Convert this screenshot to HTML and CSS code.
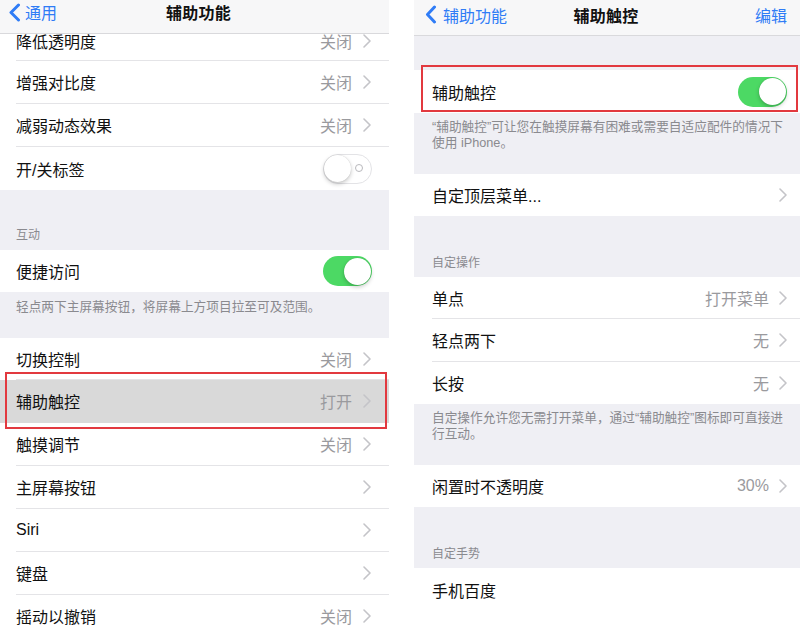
FILE: index.html
```html
<!DOCTYPE html>
<html lang="zh-CN">
<head>
<meta charset="utf-8">
<title>辅助触控</title>
<link rel="stylesheet" href="styles.css">
</head>
<body>
<div class="screen">
  <section class="panel panel-left">
    <header class="nav nav-left">
      <div class="back">
        <svg class="back-chev" width="13" height="19" viewBox="0 0 13 19"><path d="M10.5 2 L3 9.5 L10.5 17" fill="none" stroke="#2f7cf6" stroke-width="3" stroke-linecap="round" stroke-linejoin="round"/></svg>
        <span>通用</span>
      </div>
      <div class="title">辅助功能</div>
      <div class="nav-right"></div>
    </header>

    <div class="group">
      <div class="row"><div class="cell cut"><span class="label">降低透明度</span><span class="value">关闭</span><svg class="chev" width="8" height="14" viewBox="0 0 8 14"><path d="M1 1 L7 7 L1 13" fill="none" stroke="#c4c4c8" stroke-width="1.6" stroke-linecap="round" stroke-linejoin="round"/></svg></div></div>
      <div class="row"><div class="cell"><span class="label">增强对比度</span><span class="value">关闭</span><svg class="chev" width="8" height="14" viewBox="0 0 8 14"><path d="M1 1 L7 7 L1 13" fill="none" stroke="#c4c4c8" stroke-width="1.6" stroke-linecap="round" stroke-linejoin="round"/></svg></div></div>
      <div class="row"><div class="cell"><span class="label">减弱动态效果</span><span class="value">关闭</span><svg class="chev" width="8" height="14" viewBox="0 0 8 14"><path d="M1 1 L7 7 L1 13" fill="none" stroke="#c4c4c8" stroke-width="1.6" stroke-linecap="round" stroke-linejoin="round"/></svg></div></div>
      <div class="row"><div class="cell sw-cell last"><span class="label">开/关标签</span><span class="switch off"><span class="knob"></span><span class="o-mark"></span></span></div></div>
    </div>

    <div class="sec sec-l60"><span class="sechead">互动</span></div>

    <div class="group">
      <div class="row"><div class="cell sw-cell last h42"><span class="label">便捷访问</span><span class="switch on"><span class="knob"></span></span></div></div>
    </div>

    <div class="foot foot-l"><span>轻点两下主屏幕按钮，将屏幕上方项目拉至可及范围。</span></div>

    <div class="group">
      <div class="row"><div class="cell h42"><span class="label">切换控制</span><span class="value">关闭</span><svg class="chev" width="8" height="14" viewBox="0 0 8 14"><path d="M1 1 L7 7 L1 13" fill="none" stroke="#c4c4c8" stroke-width="1.6" stroke-linecap="round" stroke-linejoin="round"/></svg></div></div>
      <div class="row hl"><div class="cell"><span class="label">辅助触控</span><span class="value">打开</span><svg class="chev" width="8" height="14" viewBox="0 0 8 14"><path d="M1 1 L7 7 L1 13" fill="none" stroke="#c4c4c8" stroke-width="1.6" stroke-linecap="round" stroke-linejoin="round"/></svg></div><span class="mark mark-left"></span></div>
      <div class="row"><div class="cell"><span class="label">触摸调节</span><span class="value">关闭</span><svg class="chev" width="8" height="14" viewBox="0 0 8 14"><path d="M1 1 L7 7 L1 13" fill="none" stroke="#c4c4c8" stroke-width="1.6" stroke-linecap="round" stroke-linejoin="round"/></svg></div></div>
      <div class="row"><div class="cell"><span class="label">主屏幕按钮</span><svg class="chev" width="8" height="14" viewBox="0 0 8 14"><path d="M1 1 L7 7 L1 13" fill="none" stroke="#c4c4c8" stroke-width="1.6" stroke-linecap="round" stroke-linejoin="round"/></svg></div></div>
      <div class="row"><div class="cell"><span class="label">Siri</span><svg class="chev" width="8" height="14" viewBox="0 0 8 14"><path d="M1 1 L7 7 L1 13" fill="none" stroke="#c4c4c8" stroke-width="1.6" stroke-linecap="round" stroke-linejoin="round"/></svg></div></div>
      <div class="row"><div class="cell"><span class="label">键盘</span><svg class="chev" width="8" height="14" viewBox="0 0 8 14"><path d="M1 1 L7 7 L1 13" fill="none" stroke="#c4c4c8" stroke-width="1.6" stroke-linecap="round" stroke-linejoin="round"/></svg></div></div>
      <div class="row"><div class="cell"><span class="label">摇动以撤销</span><span class="value">关闭</span><svg class="chev" width="8" height="14" viewBox="0 0 8 14"><path d="M1 1 L7 7 L1 13" fill="none" stroke="#c4c4c8" stroke-width="1.6" stroke-linecap="round" stroke-linejoin="round"/></svg></div></div>
    </div>
  </section>

  <section class="panel panel-right">
    <header class="nav nav-r">
      <div class="back back-r">
        <svg class="back-chev" width="12" height="19" viewBox="0 0 12 19"><path d="M9.5 2 L2.5 9.5 L9.5 17" fill="none" stroke="#2f7cf6" stroke-width="3" stroke-linecap="round" stroke-linejoin="round"/></svg>
        <span>辅助功能</span>
      </div>
      <div class="title">辅助触控</div>
      <div class="nav-right"><span class="edit">编辑</span></div>
    </header>

    <div class="sec sec-r34"></div>

    <div class="group gr">
      <div class="row"><div class="cell sw-cell last"><span class="label">辅助触控</span><span class="switch on"><span class="knob"></span></span></div><span class="mark mark-right"></span></div>
    </div>

    <div class="foot foot-r"><span>“辅助触控”可让您在触摸屏幕有困难或需要自适应配件的情况下<br>使用 iPhone。</span></div>

    <div class="group gr">
      <div class="row"><div class="cell last h42"><span class="label">自定顶层菜单...</span><svg class="chev" width="8" height="14" viewBox="0 0 8 14"><path d="M1 1 L7 7 L1 13" fill="none" stroke="#c4c4c8" stroke-width="1.6" stroke-linecap="round" stroke-linejoin="round"/></svg></div></div>
    </div>

    <div class="sec sec-r61"><span class="sechead">自定操作</span></div>

    <div class="group gr">
      <div class="row"><div class="cell h42"><span class="label">单点</span><span class="value">打开菜单</span><svg class="chev" width="8" height="14" viewBox="0 0 8 14"><path d="M1 1 L7 7 L1 13" fill="none" stroke="#c4c4c8" stroke-width="1.6" stroke-linecap="round" stroke-linejoin="round"/></svg></div></div>
      <div class="row"><div class="cell"><span class="label">轻点两下</span><span class="value">无</span><svg class="chev" width="8" height="14" viewBox="0 0 8 14"><path d="M1 1 L7 7 L1 13" fill="none" stroke="#c4c4c8" stroke-width="1.6" stroke-linecap="round" stroke-linejoin="round"/></svg></div></div>
      <div class="row"><div class="cell last h42"><span class="label">长按</span><span class="value">无</span><svg class="chev" width="8" height="14" viewBox="0 0 8 14"><path d="M1 1 L7 7 L1 13" fill="none" stroke="#c4c4c8" stroke-width="1.6" stroke-linecap="round" stroke-linejoin="round"/></svg></div></div>
    </div>

    <div class="foot foot-r"><span>自定操作允许您无需打开菜单，通过“辅助触控”图标即可直接进<br>行互动。</span></div>

    <div class="group gr">
      <div class="row"><div class="cell last h42"><span class="label">闲置时不透明度</span><span class="value">30%</span><svg class="chev" width="8" height="14" viewBox="0 0 8 14"><path d="M1 1 L7 7 L1 13" fill="none" stroke="#c4c4c8" stroke-width="1.6" stroke-linecap="round" stroke-linejoin="round"/></svg></div></div>
    </div>

    <div class="sec sec-r61"><span class="sechead">自定手势</span></div>

    <div class="group gr">
      <div class="row"><div class="cell last"><span class="label">手机百度</span></div></div>
    </div>
    <div class="fill"></div>
  </section>
</div>
</body>
</html>
```

FILE: styles.css
```css
html, body {
  margin: 0;
  padding: 0;
  background: #ffffff;
}

body {
  font-family: "Liberation Sans", "Noto Sans CJK SC", sans-serif;
  color: #111111;
}

.screen {
  width: 800px;
  height: 635px;
  display: flex;
  justify-content: space-between;
  overflow: hidden;
}

.panel {
  display: flex;
  flex-direction: column;
  height: 635px;
  overflow: hidden;
  background: #efeff4;
}

.panel-left {
  width: 389px;
}

.panel-right {
  width: 386px;
}

/* navigation bar */
.nav {
  display: grid;
  grid-template-columns: 1fr auto 1fr;
  align-items: center;
  background: #f7f7f8;
  border-bottom: 1px solid #d9d9dc;
  box-sizing: border-box;
  flex: none;
}

.nav-left {
  height: 34px;
  padding: 0 0 9px 8px;
}

.nav-r {
  height: 36px;
  padding: 0 13px 6px 11px;
}

.back {
  display: flex;
  align-items: center;
  gap: 4px;
  color: #2f7cf6;
  font-size: 16px;
}

.back-r {
  gap: 6px;
}

.back-chev {
  display: block;
}

.title {
  font-size: 16px;
  font-weight: 700;
  color: #111111;
  letter-spacing: 0.3px;
}

.nav-right {
  display: flex;
  justify-content: flex-end;
}

.edit {
  color: #2f7cf6;
  font-size: 16px;
}

/* rows */
.group {
  background: #ffffff;
  flex: none;
}

.row {
  position: relative;
  display: flex;
  background: #ffffff;
  padding-left: 16px;
}

.gr .row {
  padding-left: 18px;
}

.cell {
  flex: 1;
  display: flex;
  align-items: center;
  height: 43px;
  box-sizing: border-box;
  border-bottom: 1px solid #e4e4e7;
  padding: 0 18px 0 0;
}

.gr .cell {
  padding-right: 13px;
}

.cell.cut {
  height: 27px;
  padding-top: 0;
  padding-bottom: 12px;
}

.cell.h42 {
  height: 42px;
}

.cell.last {
  border-bottom: none;
}

.sw-cell {
  padding-right: 17px;
}

.gr .sw-cell {
  padding-right: 13px;
}

.label {
  flex: 1;
  font-size: 16px;
  color: #111111;
  white-space: nowrap;
}

.value {
  font-size: 16px;
  color: #9a9a9e;
  margin-right: 11px;
}

.gr .value {
  margin-right: 10px;
}

.chev {
  display: block;
  flex: none;
}

.row.hl {
  background: #d9d9d9;
}

.row.hl .cell {
  border-bottom-color: #d9d9d9;
}

/* switches */
.switch {
  position: relative;
  display: block;
  width: 49px;
  height: 30px;
  border-radius: 15px;
  box-sizing: border-box;
  flex: none;
}

.switch.on {
  background: #4cd964;
}

.switch.off {
  background: #ffffff;
  border: 1.5px solid #e3e3e6;
}

.knob {
  position: absolute;
  top: 1.5px;
  width: 27px;
  height: 27px;
  border-radius: 50%;
  background: #ffffff;
  box-shadow: 0 2px 4px rgba(0, 0, 0, 0.22), 0 0 1px rgba(0, 0, 0, 0.2);
}

.switch.on .knob {
  right: 1.5px;
}

.switch.off .knob {
  left: 0;
  top: 0;
}

.o-mark {
  position: absolute;
  right: 8px;
  top: 9px;
  width: 8px;
  height: 8px;
  border-radius: 50%;
  border: 1.3px solid #b8b8bc;
  box-sizing: border-box;
}

/* red marker boxes */
.mark {
  position: absolute;
  z-index: 2;
  border: 2px solid #e2393f;
  pointer-events: none;
}

.mark-left {
  top: -8px;
  bottom: -6px;
  left: 5px;
  right: 2px;
}

.mark-right {
  top: -5px;
  bottom: 1px;
  left: 7px;
  right: 2px;
}

/* section headers and footers */
.sec {
  flex: none;
  box-sizing: border-box;
  display: flex;
  align-items: flex-end;
}

.sec-l60 {
  height: 60px;
  padding: 0 0 8px 16px;
}

.sec-r34 {
  height: 34px;
}

.sec-r61 {
  height: 61px;
  padding: 0 0 7px 18px;
}

.sechead {
  font-size: 12px;
  line-height: 14px;
  color: #8a8a8f;
}

.foot {
  flex: none;
  box-sizing: border-box;
  font-size: 12.7px;
  line-height: 16px;
  color: #8a8a8f;
  white-space: nowrap;
}

.foot-l {
  height: 46px;
  padding: 7px 0 0 16px;
}

.foot-r {
  height: 61px;
  padding: 6px 0 0 18px;
}

.fill {
  flex: 1;
  background: #ffffff;
}
```
